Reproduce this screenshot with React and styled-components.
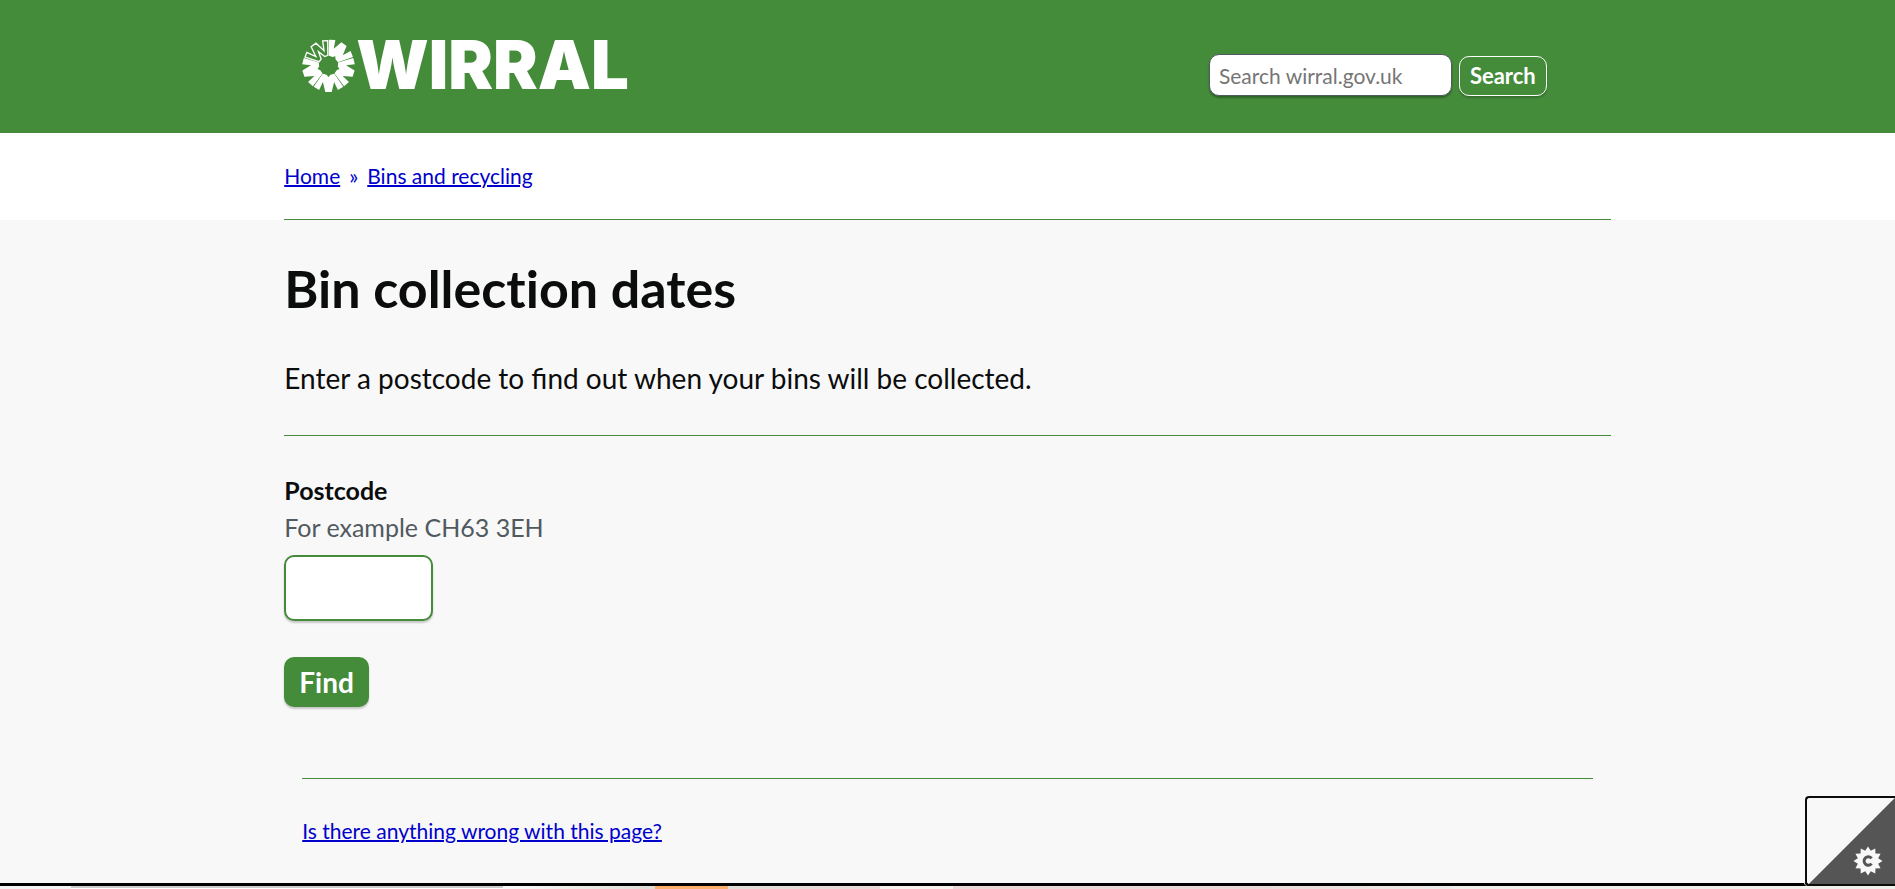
import React from "react";
import styled, { createGlobalStyle } from "styled-components";

const green = "#448c3a";
const blue = "#0000cc";

const Global = createGlobalStyle`
  *, *::before, *::after { box-sizing: border-box; }
  body {
    margin: 0;
    background: #f8f8f8;
    color: #0b0c0c;
    font-family: Lato, "Liberation Sans", sans-serif;
    font-size: 21px;
    line-height: 32px;
  }
`;

const Page = styled.div`
  display: flex;
  flex-direction: column;
  min-height: 100vh;
`;

const Container = styled.div`
  width: 70%;
  margin: 0 auto;
`;

const Header = styled.header`
  background: ${green};
`;

const HeaderRow = styled(Container)`
  display: flex;
  align-items: flex-start;
  justify-content: space-between;
  height: 133px;
  padding: 38px 64px 0 18px;
`;

const Logo = styled.a`
  display: flex;
  align-items: center;
  gap: 1px;
  color: #fff;
  text-decoration: none;
`;

const Wordmark = styled.span`
  font-family: Inter, "Liberation Sans", sans-serif;
  font-size: 67px;
  font-weight: 900;
  line-height: 54px;
`;

const SearchForm = styled.form`
  display: flex;
  align-items: flex-end;
  gap: 7px;
  padding-top: 16px;
`;

const SearchInput = styled.input`
  width: 243px;
  height: 42px;
  padding: 0 9px;
  border: 1px solid #505a5f;
  border-radius: 10px;
  background: #fff;
  font: inherit;
  box-shadow: 0 2px 2px rgba(0, 0, 0, 0.3);
  &::placeholder { color: #757575; opacity: 1; }
`;

const Button = styled.button`
  height: ${(p) => (p.$outline ? 40 : 50)}px;
  padding: 0 ${(p) => (p.$outline ? 10 : 15)}px;
  border: ${(p) => (p.$outline ? "1px solid #fff" : "0")};
  border-radius: 10px;
  background: ${green};
  color: #fff;
  font: inherit;
  font-size: ${(p) => (p.$outline ? 22 : 28)}px;
  font-weight: 700;
  box-shadow: 0 2px 2px rgba(0, 0, 0, 0.2);
`;

const Band = styled.div`
  background: #fff;
`;

const Breadcrumbs = styled(Container).attrs({ as: "nav" })`
  display: flex;
  gap: 9px;
  padding: 27px 0;
  border-bottom: 1px solid ${green};
  color: ${blue};
`;

const Link = styled.a`
  color: ${blue};
  text-decoration: underline;
  text-decoration-thickness: 2px;
`;

const Main = styled(Container).attrs({ as: "main" })`
  flex: 1;
`;

const Title = styled.h1`
  margin: 36px 0 37px;
  font-size: 52px;
  line-height: 64px;
  font-variant-ligatures: none;
`;

const Intro = styled.p`
  margin: 0;
  padding-bottom: 36px;
  border-bottom: 1px solid ${green};
  font-size: 28px;
  line-height: 42px;
`;

const FinderForm = styled.form`
  display: flex;
  flex-direction: column;
  align-items: flex-start;
  padding-top: 36px;
  font-size: 25px;
  line-height: 37px;
`;

const Label = styled.label`
  font-weight: 700;
`;

const Hint = styled.span`
  color: #505a5f;
`;

const PostcodeInput = styled.input`
  width: 149px;
  height: 66px;
  margin: 9px 0 36px;
  padding: 0 12px;
  border: 2px solid ${green};
  border-radius: 10px;
  background: #fff;
  font: inherit;
  box-shadow: 0 2px 2px rgba(0, 0, 0, 0.2);
`;

const Feedback = styled.div`
  margin: 71px 18px 0;
  padding: 36px 0;
  border-top: 1px solid ${green};
`;

const Strip = styled.div`
  display: flex;
  height: 6px;
  border-top: 3px solid #000;
`;

const Segment = styled.span`
  flex: ${(p) => p.$grow} 0 0;
  background: ${(p) => p.$fill};
`;

const Preferences = styled.button`
  position: fixed;
  right: 0;
  bottom: 3px;
  width: 90px;
  height: 90px;
  padding: 0;
  border: 2px solid #0b0c0c;
  border-right: 0;
  border-radius: 4px 0 0 4px;
  background: linear-gradient(135deg, #f8f8f8 50%, #555 calc(50% + 1px));
  box-shadow: -1px 0 0 #f8f8f8;
`;

const Cog = styled.svg`
  position: absolute;
  right: 12px;
  bottom: 8px;
`;

const segments = [
  [71, "#f4f4f4"],
  [432, "linear-gradient(#ccc 2px, #fff 2px)"],
  [152, "linear-gradient(90deg, #fafafa, #dedbd4)"],
  [73, "#fbae6c"],
  [152, "linear-gradient(90deg, #e0ddd6, #e8d8d6)"],
  [73, "#f8f2ee"],
  [300, "#e8d8d6"],
  [200, "linear-gradient(90deg, #e8d8d6, #ececea)"],
  [442, "#f0efec"],
];

const cogPoints = Array.from({ length: 24 }, (_, i) => {
  const r = i % 2 ? 10.5 : 14.5;
  const a = (i * Math.PI) / 12;
  return `${(15 + r * Math.cos(a)).toFixed(2)},${(15 + r * Math.sin(a)).toFixed(2)}`;
}).join(" ");

const solidPetal =
  "M-14.8 -21.2 L-9.4 -24.6 L-5.6 -16.6 L-3.2 -26.4 L3.2 -26.4 L5.6 -16.6 L9.4 -24.6 L14.8 -21.2 L5.8 -8.2 L2 -9.2 L0 -11.5 L-2 -9.2 L-5.8 -8.2 Z";
const outlinePetal =
  "M-14 -20.6 L-9.8 -23.4 L-5 -14.5 L-3 -25.4 L3 -25.4 L5 -14.5 L9.8 -23.4 L14 -20.6 L5.4 -8.6 L2.2 -9.4 L0 -17 L-2.2 -9.4 L-5.4 -8.6 Z";

function Emblem() {
  return (
    <svg width="53" height="53" viewBox="-26.5 -26.5 53 53" aria-hidden="true">
      {[36, 108, 180, 252].map((a) => (
        <path key={a} d={solidPetal} fill="#fff" transform={`rotate(${a})`} />
      ))}
      <path d={outlinePetal} fill="none" stroke="#fff" strokeWidth="1.3" transform="rotate(-36)" />
    </svg>
  );
}

export default function App() {
  return (
    <Page>
      <Global />
      <Header>
        <HeaderRow>
          <Logo href="#" aria-label="Wirral">
            <Emblem />
            <Wordmark>WIRRAL</Wordmark>
          </Logo>
          <SearchForm role="search">
            <SearchInput type="search" aria-label="Search wirral.gov.uk" placeholder="Search wirral.gov.uk" />
            <Button type="button" $outline>Search</Button>
          </SearchForm>
        </HeaderRow>
      </Header>
      <Band>
        <Breadcrumbs aria-label="Breadcrumb">
          <Link href="#">Home</Link>
          <span>»</span>
          <Link href="#">Bins and recycling</Link>
        </Breadcrumbs>
      </Band>
      <Main>
        <Title>Bin collection dates</Title>
        <Intro>Enter a postcode to find out when your bins will be collected.</Intro>
        <FinderForm>
          <Label htmlFor="postcode">Postcode</Label>
          <Hint id="postcode-hint">For example CH63 3EH</Hint>
          <PostcodeInput id="postcode" type="text" aria-describedby="postcode-hint" />
          <Button type="button">Find</Button>
        </FinderForm>
        <Feedback>
          <Link href="#">Is there anything wrong with this page?</Link>
        </Feedback>
      </Main>
      <Strip>
        {segments.map(([grow, fill], i) => (
          <Segment key={i} $grow={grow} $fill={fill} />
        ))}
      </Strip>
      <Preferences type="button" aria-label="Cookie preferences">
        <Cog width="30" height="30" viewBox="0 0 30 30" aria-hidden="true">
          <polygon points={cogPoints} fill="#f8f8f8" />
          <path d="M18.6 12.4 A4.2 4.2 0 1 0 18.6 17.6" fill="none" stroke="#555" strokeWidth="3" />
        </Cog>
      </Preferences>
    </Page>
  );
}
